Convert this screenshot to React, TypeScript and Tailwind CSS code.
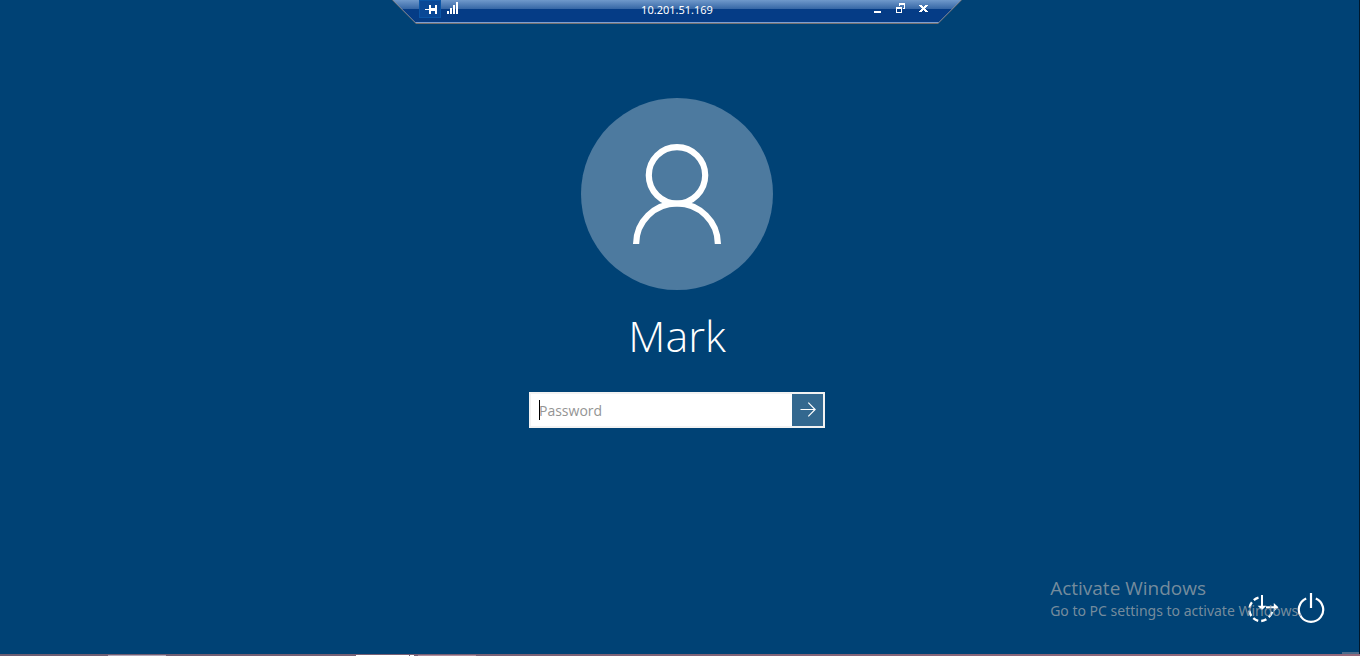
import React from "react";

function PinIcon() {
  return (
    <svg width="12" height="9" viewBox="0 0 12 9" fill="#fff" shapeRendering="crispEdges" aria-hidden="true">
      <path d="M0 4h4v1H0zM4 0h2v9H4zM6 3h4v3H6zM10 0h2v9h-2z" />
    </svg>
  );
}

function SignalIcon() {
  return (
    <svg width="12" height="12" viewBox="0 0 12 12" fill="#fff" shapeRendering="crispEdges" aria-hidden="true">
      <path d="M0 9h2v3H0zM3 6h2v6H3zM6 3h2v9H6zM9 0h2v12H9z" />
    </svg>
  );
}

function ConnectionBar() {
  return (
    <header className="mx-auto h-[24px] w-[570px] max-w-full bg-[#76716f] [clip-path:polygon(0_0,100%_0,calc(100%-24px)_100%,24px_100%)]">
      <div className="mx-px h-[23px] bg-[#7d9fd0] [clip-path:polygon(0_0,100%_0,calc(100%-23px)_100%,23px_100%)]">
        <div className="grid h-[22px] grid-cols-[1fr_auto_1fr] bg-[linear-gradient(#7099cb_0px,#3566a5_9px,#053c86_9px,#053c86_22px)] px-px [clip-path:polygon(0_0,100%_0,calc(100%-22px)_100%,22px_100%)]">
          <div className="flex items-start pl-[25px]">
            <button aria-label="Pin the connection bar" className="flex h-[18px] w-[22px] items-center justify-center border border-[#0b55a6] bg-[#0a4896] pl-[2px]">
              <PinIcon />
            </button>
            <button aria-label="Connection quality" className="ml-[6px] pt-[2px]">
              <SignalIcon />
            </button>
          </div>
          <h1 className="font-['Noto_Sans','Open_Sans',sans-serif] text-[11px] leading-[19px] text-white">10.201.51.169</h1>
          <div className="flex items-start justify-end pr-[32px]">
            <button aria-label="Minimize" className="pt-[11px]">
              <svg width="7" height="2" viewBox="0 0 7 2" aria-hidden="true"><path d="M0 0h7v2H0z" fill="#fff" /></svg>
            </button>
            <button aria-label="Restore" className="ml-[15px] pt-[3px]">
              <svg width="9" height="10" viewBox="0 0 9 10" fill="#fff" shapeRendering="crispEdges" aria-hidden="true">
                <path d="M3 0h6v6H7V5h1V2H4v1H3zM0 4h6v6H0zM1 6v3h4V6z" fillRule="evenodd" />
              </svg>
            </button>
            <button aria-label="Close" className="ml-[14px] pt-[5px]">
              <svg width="9" height="7" viewBox="0 0 9 7" fill="#fff" shapeRendering="crispEdges" aria-hidden="true">
                <path d="M0 0h3v1h1v1h1V1h1V0h3v1H8v1H7v1H6v1h1v1h1v1h1v1H6V6H5V5H4v1H3v1H0V6h1V5h1V4h1V3H2V2H1V1H0z" />
              </svg>
            </button>
          </div>
        </div>
      </div>
    </header>
  );
}

function Avatar() {
  return (
    <svg width="192" height="192" viewBox="0 0 192 192" fill="none" aria-hidden="true">
      <circle cx="96" cy="96" r="96" fill="#4d7a9f" />
      <g stroke="#fff" strokeWidth="6.2">
        <circle cx="96" cy="77.3" r="28.2" />
        <path d="M55.1 146a40.9 40.5 0 0 1 81.8 0" />
      </g>
    </svg>
  );
}

function EaseOfAccessIcon() {
  return (
    <svg width="32" height="30" viewBox="0 0 32 30" fill="none" stroke="#fff" aria-hidden="true">
      <path
        d="M10.5 3.6A12 12 0 0 0 5.8 6.1M3.9 8.2A12 12 0 0 0 1.5 13.6M1.4 16.7A12 12 0 0 0 3.3 22M5.3 24.2A12 12 0 0 0 10.2 26.8M13.2 27A12 12 0 0 0 18.4 25.2M20.7 23.2A12 12 0 0 0 24.2 17.8"
        strokeWidth="2.3"
      />
      <path d="M14 1v13M18 13.2h10" strokeWidth="2" />
      <path d="M9.6 11.8h8.8L14 16zM25.8 8.9l4.6 4.3-4.6 4.3z" fill="#fff" stroke="none" />
    </svg>
  );
}

function PowerIcon() {
  return (
    <svg width="28" height="31" viewBox="0 0 28 31" fill="none" stroke="#fff" strokeWidth="2.2" aria-hidden="true">
      <path d="M9.2 5.5A12.2 12.2 0 1 0 18.8 5.5M14 0v15" />
    </svg>
  );
}

export default function App() {
  return (
    <div className="flex min-h-screen flex-col bg-[#004275] font-['Open_Sans','Noto_Sans',sans-serif] text-white">
      <div className="relative flex grow flex-col border-r border-[#00182c]">
        <div className="flex grow flex-col pr-[5px]">
          <ConnectionBar />
          <main className="flex grow flex-col items-center pt-[74px]">
            <Avatar />
            <h2 className="mt-[14px] text-[43px] leading-[64px] font-light">Mark</h2>
            <form className="mt-[24px] flex h-[36px] w-[296px] border-2 border-[#f2f2f2] bg-white" onSubmit={(e: React.FormEvent) => e.preventDefault()}>
              <div className="relative min-w-0 grow">
                <input aria-label="Password" type="password" placeholder="Password" className="h-full w-full bg-transparent px-[8px] text-[14px] text-black caret-transparent outline-none placeholder:text-[#949494]" />
                <span className="absolute top-[6px] left-[8px] h-[20px] w-px bg-black" />
              </div>
              <button type="submit" aria-label="Sign in" className="flex w-[31px] items-center justify-center bg-[#33688f]">
                <svg width="16" height="16" viewBox="0 0 16 16" fill="none" stroke="#fff" strokeWidth="1.2" aria-hidden="true">
                  <path d="M0.5 7.5h14.6M8.3 0.7l6.8 6.8-6.8 6.8" />
                </svg>
              </button>
            </form>
          </main>
          <footer className="relative flex items-end justify-end gap-[17px] pr-[29px] pb-[30px]">
            <button aria-label="Ease of access"><EaseOfAccessIcon /></button>
            <button aria-label="Power"><PowerIcon /></button>
            <aside className="pointer-events-none absolute right-[52px] bottom-[33px] text-[#95a0a8]/80">
              <p className="text-[19px] leading-[25px]">Activate Windows</p>
              <p className="font-['Noto_Sans','Open_Sans',sans-serif] text-[14px] leading-[20px]">Go to PC settings to activate Windows.</p>
            </aside>
          </footer>
        </div>
        <span className="absolute right-0 bottom-0 h-[2px] w-[17px] bg-[#4a6c8c]" />
      </div>
      <div className="flex h-[2px] bg-linear-to-r from-[#6c5d72] to-[#94697c]">
        <div className="mt-px ml-[108px] w-[58px] bg-[#b3a7b8]" />
        <div className="mt-px ml-[190px] w-[53px] bg-white" />
        <div className="mt-px ml-px w-[4px] bg-white" />
        <div className="mt-px ml-[4px] w-[58px] bg-[#b08e9d]" />
      </div>
    </div>
  );
}
